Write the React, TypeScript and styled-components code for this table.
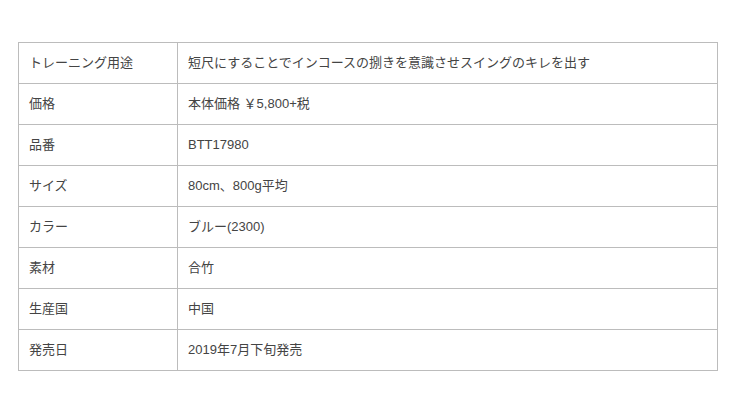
import React from 'react';
import styled, { createGlobalStyle } from 'styled-components';

const GlobalStyle = createGlobalStyle`
    body {
        margin: 0;
        background: #fff;
        font-family: "Liberation Sans", "Noto Sans CJK JP", sans-serif;
    }
`;

const Wrapper = styled.div`
    padding: 42px 23px 0 18px;
`;

const Table = styled.table`
    width: 700px;
    border-collapse: collapse;
    table-layout: fixed;
`;

const Row = styled.tr`
    height: 41px;
`;

const Cell = styled.td<{ $head?: boolean }>`
    width: ${props => (props.$head ? '138px' : 'auto')};
    border: 1px solid #bcbcbc;
    padding: 0 10px 2px;
    font-size: 13px;
    color: #444;
    vertical-align: middle;
    line-height: 1;
`;

const specs: [string, string][] = [
  ['トレーニング用途', '短尺にすることでインコースの捌きを意識させスイングのキレを出す'],
  ['価格', '本体価格 ￥5,800+税'],
  ['品番', 'BTT17980'],
  ['サイズ', '80cm、800g平均'],
  ['カラー', 'ブルー(2300)'],
  ['素材', '合竹'],
  ['生産国', '中国'],
  ['発売日', '2019年7月下旬発売'],
];

const App: React.FC = () => {
  return (
    <Wrapper>
      <GlobalStyle />
      <Table>
        <tbody>
          {specs.map(([label, value]) => (
            <Row key={label}>
              <Cell $head>{label}</Cell>
              <Cell>{value}</Cell>
            </Row>
          ))}
        </tbody>
      </Table>
    </Wrapper>
  );
};

export default App;
